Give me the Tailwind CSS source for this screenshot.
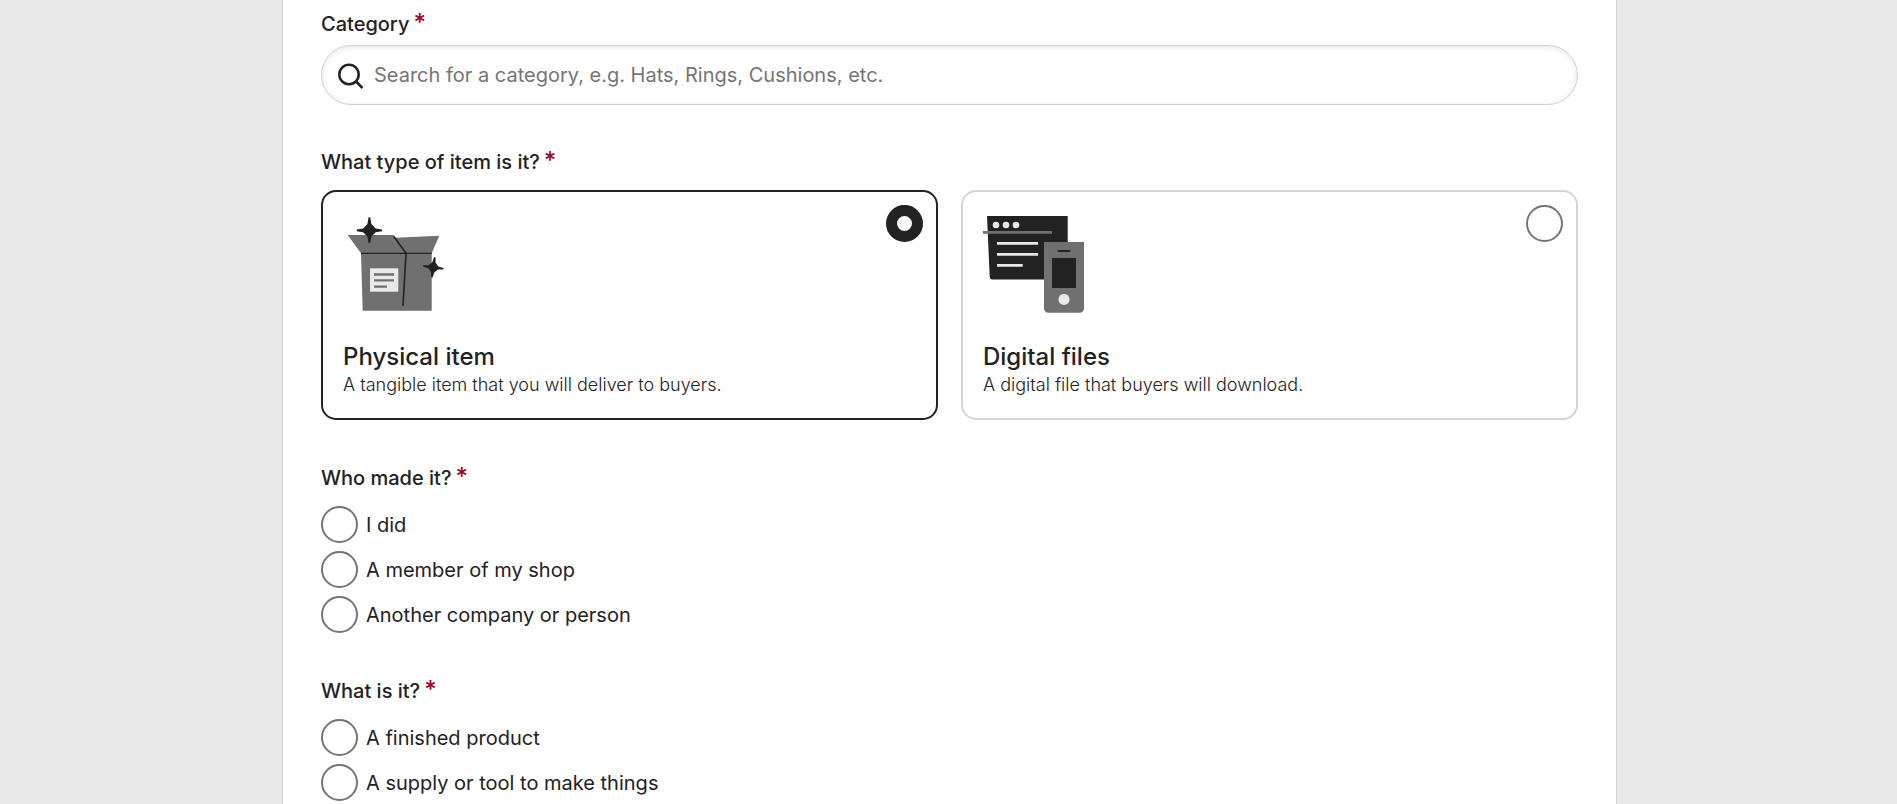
<!DOCTYPE html>
<html lang="en">
<head>
  <meta charset="UTF-8" />
  <meta name="viewport" content="width=device-width, initial-scale=1.0"/>
  <title>Create a listing</title>
  <script src="https://cdn.jsdelivr.net/npm/@tailwindcss/browser@4"></script>
</head>
<body class="bg-[#e9e9e9] pl-0.5 font-['Inter','Liberation_Sans',sans-serif] text-xl text-[#222222] overflow-hidden">

  <main class="max-w-[1335px] min-h-screen mx-auto bg-white border-x border-[#d4d4d4] px-[38px] pt-2.5">
    <form>

      <!-- Category -->
      <div class="mb-[43px]">
        <label for="category" class="block font-medium leading-7 mb-[7px]">Category<span class="text-[#a6002f] text-2xl leading-5 ml-1">*</span></label>
        <div class="flex items-center h-[60px] rounded-full border border-[#d0d0d0] pl-[15px] pr-6 shadow-[inset_0_1px_6px_rgba(0,0,0,0.1)]">
          <svg class="w-[27px] h-[27px] mr-2.5 shrink-0" viewBox="0 0 27 27" fill="none" stroke="#222222" stroke-width="2.5" aria-hidden="true">
            <circle cx="12" cy="12.5" r="9.7"/>
            <path d="M19 19.5l6.5 6.5"/>
          </svg>
          <input type="text" id="category" placeholder="Search for a category, e.g. Hats, Rings, Cushions, etc." class="flex-1 h-full bg-transparent outline-none placeholder:text-[#757575]">
        </div>
      </div>

      <!-- Item type -->
      <fieldset class="mb-11">
        <legend class="font-medium leading-7 mb-3.5">What type of item is it?<span class="text-[#a6002f] text-2xl leading-5 ml-1">*</span></legend>
        <div class="grid grid-cols-2 gap-[23px]">
          <label class="relative block border-2 border-[#d4d4d4] has-checked:border-[#222222] rounded-[15px] px-5 pt-[23px] pb-[19px]">
            <input type="radio" name="type" checked class="absolute top-[13px] right-[13px] appearance-none size-[37px] rounded-full border-2 border-[#757575] checked:border-[11px] checked:border-[#222222]">
            <svg class="w-[104px] h-[100px] mb-7" viewBox="0 0 104 100" aria-hidden="true">
              <path fill="#707070" d="M18 38.3L4.7 20H50.3l2 2.7 44-2-7.6 17.6v57.4h-69z"/>
              <path fill="none" stroke="#222222" stroke-width="1.2" d="M18 38.4h70.7"/>
              <path fill="none" stroke="#222222" stroke-width="1.6" d="M50.7 21.3L63 38.3 60 91"/>
              <path fill="#e9e9e9" d="M27 53.3h28.3v23.4H27z"/>
              <path fill="none" stroke="#707070" stroke-width="2.3" d="M31 59.5h20M31 65.3h20M31 71.6h13"/>
              <path fill="#222222" d="M25.6 2.3h1.6l1.2 6.7 4.3 4.6 6.3 1v1.6l-6.3 1-4.3 4.3-1.2 6.5h-1.6l-1.2-6.5-4.3-4.3-6.3-1v-1.6l6.3-1L24.4 9z"/>
              <path fill="#222222" transform="rotate(8 90.3 52.3)" d="M89.6 42h1.4l1 5.4 3.2 3.4 5.4.8V53l-5.4.9-3.2 3.3-1 5.4h-1.4l-1-5.4-3.2-3.3L80 53v-1.4l5.4-.8 3.2-3.4z"/>
            </svg>
            <span class="block font-medium text-2xl leading-7">Physical item</span>
            <span class="block font-light text-lg leading-7">A tangible item that you will deliver to buyers.</span>
          </label>
          <label class="relative block border-2 border-[#d4d4d4] has-checked:border-[#222222] rounded-[15px] px-5 pt-[23px] pb-[19px]">
            <input type="radio" name="type" class="absolute top-[13px] right-[13px] appearance-none size-[37px] rounded-full border-2 border-[#757575] checked:border-[11px] checked:border-[#222222]">
            <svg class="w-[104px] h-[100px] mb-7" viewBox="0 0 104 100" aria-hidden="true">
              <path fill="#222222" d="M4 1h80.7v63.5H9.5q-2.7 0-2.8-3z"/>
              <g fill="#e9e9e9">
                <circle cx="13" cy="10" r="3.3"/>
                <circle cx="23" cy="10" r="3.3"/>
                <circle cx="33" cy="10" r="3.3"/>
                <path d="M14 27h41v2.7H14zM14 38h41v2.7H14zM14 49h25.7v2.7H14z"/>
              </g>
              <path fill="#707070" d="M0 16h69v2.7H0z"/>
              <path fill="#707070" d="M61 27h40v66q0 4.7-4.7 4.7H65.7Q61 97.7 61 93z"/>
              <path fill="#222222" d="M74.7 35h12.6v2H74.7zM69 43h24v30H69z"/>
              <circle cx="81" cy="84.4" r="5.6" fill="#e9e9e9"/>
            </svg>
            <span class="block font-medium text-2xl leading-7">Digital files</span>
            <span class="block font-light text-lg leading-7">A digital file that buyers will download.</span>
          </label>
        </div>
      </fieldset>

      <!-- Who made it -->
      <fieldset class="mb-11">
        <legend class="font-medium leading-7 mb-3.5">Who made it?<span class="text-[#a6002f] text-2xl leading-5 ml-1">*</span></legend>
        <div class="flex flex-col gap-2">
          <label class="flex items-center gap-2"><input type="radio" name="maker" class="appearance-none size-[37px] rounded-full border-2 border-[#757575] checked:border-[11px] checked:border-[#222222]">I did</label>
          <label class="flex items-center gap-2"><input type="radio" name="maker" class="appearance-none size-[37px] rounded-full border-2 border-[#757575] checked:border-[11px] checked:border-[#222222]">A member of my shop</label>
          <label class="flex items-center gap-2"><input type="radio" name="maker" class="appearance-none size-[37px] rounded-full border-2 border-[#757575] checked:border-[11px] checked:border-[#222222]">Another company or person</label>
        </div>
      </fieldset>

      <!-- What is it -->
      <fieldset>
        <legend class="font-medium leading-7 mb-3.5">What is it?<span class="text-[#a6002f] text-2xl leading-5 ml-1">*</span></legend>
        <div class="flex flex-col gap-2">
          <label class="flex items-center gap-2"><input type="radio" name="kind" class="appearance-none size-[37px] rounded-full border-2 border-[#757575] checked:border-[11px] checked:border-[#222222]">A finished product</label>
          <label class="flex items-center gap-2"><input type="radio" name="kind" class="appearance-none size-[37px] rounded-full border-2 border-[#757575] checked:border-[11px] checked:border-[#222222]">A supply or tool to make things</label>
        </div>
      </fieldset>

    </form>
  </main>

</body>
</html>
